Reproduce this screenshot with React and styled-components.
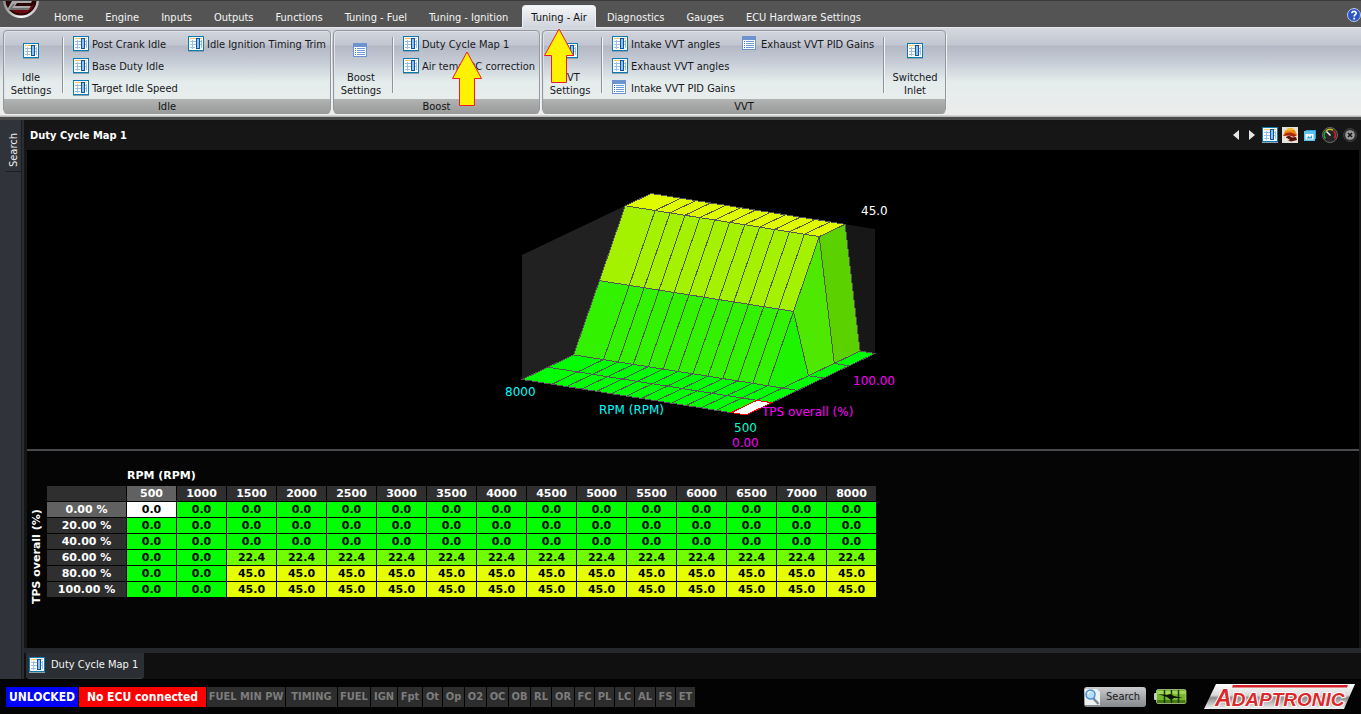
import React from "react";
import styled, { createGlobalStyle, css } from "styled-components";

const GlobalStyle = createGlobalStyle`
  * {
    box-sizing: border-box;
  }
  body {
    margin: 0;
    background: #030303;
    font-family: "DejaVu Sans Condensed", "DejaVu Sans", sans-serif;
    font-size: 11px;
    line-height: 13px;
  }
  button {
    border: 0;
    padding: 0;
    background: none;
    color: inherit;
    font: inherit;
    cursor: pointer;
  }
`;

/* ---------- data ---------- */

const menuTabs = [
  "Home",
  "Engine",
  "Inputs",
  "Outputs",
  "Functions",
  "Tuning - Fuel",
  "Tuning - Ignition",
  "Tuning - Air",
  "Diagnostics",
  "Gauges",
  "ECU Hardware Settings",
];
const activeTab = "Tuning - Air";

const flags = [
  ["FUEL MIN PW", 78],
  ["TIMING", 51],
  ["FUEL", 32],
  ["IGN", 26],
  ["Fpt", 24],
  ["Ot", 19],
  ["Op", 21],
  ["O2", 21],
  ["OC", 21],
  ["OB", 21],
  ["RL", 20],
  ["OR", 22],
  ["FC", 19],
  ["PL", 19],
  ["LC", 19],
  ["AL", 20],
  ["FS", 19],
  ["ET", 19],
];

const rpms = [
  500, 1000, 1500, 2000, 2500, 3000, 3500, 4000, 4500, 5000, 5500, 6000, 6500,
  7000, 8000,
];
const tps = [0, 20, 40, 60, 80, 100];

const dutyAt = (rpm, load) => {
  if (rpm < 1500 || load < 60) return 0;
  return load === 60 ? 22.4 : 45;
};

/* ---------- icons ---------- */

const MapIcon = () => (
  <svg width="16" height="16" viewBox="0 0 16 16">
    <rect x="0" y="0" width="16" height="15" fill="#0c7ab0" />
    <rect x="0" y="15" width="16" height="1" fill="#8fa3ae" />
    <rect x="1" y="1" width="14" height="13" fill="#fff" />
    <rect x="2" y="2" width="12" height="1" fill="#f7c46c" />
    <path
      d="M2 5.500H14M2 8.500H14M2 11.500H7M4.500 4V13M13.500 4V12"
      stroke="#9dbfdd"
      fill="none"
    />
    <rect x="8" y="2" width="4" height="11" fill="#0b56ab" />
    <rect x="9" y="3" width="2" height="9" fill="#8fc0f2" />
  </svg>
);

const ListIcon = () => (
  <svg width="16" height="16" viewBox="0 0 16 16">
    <rect x="0" y="0" width="14" height="14" fill="#6c93cf" />
    <rect x="1" y="4" width="12" height="9" fill="#fff" />
    <path d="M2 5.500H3M2 7.500H3M2 9.500H3M2 11.500H3" stroke="#3f6cb4" />
    <path d="M4 5.500H12M4 7.500H12M4 9.500H12M4 11.500H12" stroke="#6f9ad8" />
  </svg>
);

const SurfaceIcon = () => (
  <svg width="16" height="16" viewBox="0 0 16 16">
    <rect width="16" height="16" fill="#e6e2dc" />
    <path d="M1 9 3 4 6 1.500 10 1 13 3.500 15 8 9 6.500Z" fill="#e88a10" />
    <path d="M3 4 6 1.500 10 1 12 3Z" fill="#f5c030" />
    <path d="M1 9 4 6 9 5.500 15 8 12 10 7 8.500Z" fill="#b02808" />
    <path d="M4 10 7 8.500 10 10.500 14 10 15 13 9 14.500 5 13Z" fill="#5a1204" />
    <path d="M1 12 5 11 8 13 3 14Z" fill="#f6e8d8" />
  </svg>
);

const WindowsIcon = () => (
  <svg width="16" height="16" viewBox="0 0 16 16">
    <path d="M4 3H14V12H4Z" fill="#2d9fd6" />
    <rect x="2" y="4" width="11" height="10" fill="#5cc3ee" />
    <rect x="3.500" y="7" width="8" height="5.500" fill="#f2fbff" />
    <path d="M4.500 11.500 6.500 9 8 10.500 10 8V11.500Z" fill="#3a9fd4" />
  </svg>
);

const GaugeIcon = () => (
  <svg width="16" height="16" viewBox="0 0 16 16">
    <circle cx="8" cy="8" r="7.500" fill="#252525" stroke="#6d6d6d" />
    <path d="M3.500 11.500A5.500 5.500 0 0 1 4 4" stroke="#1fb03a" strokeWidth="1.500" fill="none" />
    <path d="M4 4A5.500 5.500 0 0 1 11 3.300" stroke="#c9c020" strokeWidth="1.500" fill="none" />
    <path d="M11.500 3.800A5.500 5.500 0 0 1 12.300 11.500" stroke="#d82020" strokeWidth="1.500" fill="none" />
    <path d="M4.500 4.500 8.500 8.500" stroke="#f4f4f4" strokeWidth="1.500" />
  </svg>
);

const CloseIcon = () => (
  <svg width="16" height="16" viewBox="-1 -1 16 16">
    <circle cx="7" cy="7" r="6.500" fill="#2d2d2d" stroke="#3b3b3b" />
    <circle cx="7" cy="7" r="4.800" fill="#9b9b9b" />
    <path d="M5 5 9 9M9 5 5 9" stroke="#151515" strokeWidth="1.500" />
  </svg>
);

const Chevron = ({ flip }) => (
  <svg width="6" height="10" viewBox="0 0 6 10">
    <path d={flip ? "M0 0 6 5 0 10Z" : "M6 0 0 5 6 10Z"} fill="#e4e4e4" />
  </svg>
);

const HelpIcon = () => (
  <svg width="14" height="14" viewBox="0 0 14 14">
    <circle cx="7" cy="7" r="6.500" fill="#2b55c4" stroke="#b9c8ea" />
    <path
      d="M4.800 5.300C4.800 2.600 9.300 2.700 9.200 5.300 9.100 6.800 7.200 6.700 7.200 8.600"
      stroke="#fff"
      strokeWidth="1.700"
      fill="none"
    />
    <rect x="6.300" y="9.700" width="1.800" height="1.800" fill="#fff" />
  </svg>
);

const MagnifierIcon = () => (
  <svg width="17" height="18" viewBox="0 0 17 18">
    <path d="M1 1H13L16 4V17H1Z" fill="#eef1f4" />
    <path d="M9 10 14.500 16" stroke="#7c8790" strokeWidth="2.500" />
    <circle cx="6.500" cy="6.500" r="4.500" fill="#b5defa" stroke="#4c8fcf" strokeWidth="1.500" />
    <path d="M4 6A3 3 0 0 1 7 3.500" stroke="#fff" strokeWidth="1.200" fill="none" />
  </svg>
);

const BatteryIcon = () => (
  <svg width="33" height="15" viewBox="0 0 33 15">
    <rect x="0" y="4" width="3" height="7" rx="1" fill="#c9c9c9" />
    <rect x="2.500" y="0.500" width="29.500" height="14" rx="1.500" fill="#76b82a" stroke="#d5e8c0" strokeWidth="0.600" />
    <rect x="3" y="2" width="28.500" height="3" fill="#a4d45a" />
    <rect x="3" y="11" width="28.500" height="3" fill="#467c12" />
    <path d="M10.500 1V14M17.500 1V14M24.500 1V14" stroke="#1c3804" strokeWidth="1.500" />
    <path d="M4 5 13 6 16 5 20 7 29 9 20 9 17 11 13 8Z" fill="#0c1404" />
  </svg>
);

const OrbIcon = () => (
  <svg width="43" height="18" viewBox="0 0 43 18">
    <defs>
      <linearGradient id="ring" x1="0" y1="0" x2="1" y2="0">
        <stop offset="0" stopColor="#8a8a8a" />
        <stop offset="0.500" stopColor="#ffffff" />
        <stop offset="1" stopColor="#b5b5b5" />
      </linearGradient>
    </defs>
    <circle cx="21" cy="-1" r="18" fill="url(#ring)" />
    <circle cx="21" cy="-1" r="15.500" fill="#2a0405" />
    <path d="M10 8Q21 17 32 8L34 3 26 9Z" fill="#6b0b0f" />
    <path d="M12 0H32L31 2H17L15 5H31L28 9H7Z" fill="#a9a9a9" />
    <path d="M9 8 13 3H15L12 7H29L28 9H8Z" fill="#6f6f6f" />
  </svg>
);

const BrandLogo = () => (
  <svg width="154" height="27" viewBox="0 0 154 27" role="img" aria-label="Adaptronic">
    <defs>
      <linearGradient id="plate" x1="0" y1="0" x2="0" y2="1">
        <stop offset="0" stopColor="#ffffff" />
        <stop offset="0.450" stopColor="#d9d9d9" />
        <stop offset="0.550" stopColor="#8d8d8d" />
        <stop offset="1" stopColor="#f4f4f4" />
      </linearGradient>
    </defs>
    <path d="M13 1H152L141 26H1Z" fill="url(#plate)" />
    <path d="M30 2H145L144 4.500H29Z" fill="#d8202a" />
    <text
      x="12"
      y="23"
      fill="#dc2a2c"
      stroke="#ffffff"
      strokeWidth="2"
      paintOrder="stroke"
      fontFamily="'Liberation Sans', sans-serif"
      fontWeight="bold"
      fontStyle="italic"
      fontSize="19"
    >
      <tspan fontSize="23">A</tspan>DAPTRONIC
    </text>
  </svg>
);

const ArrowMark = ({ left = "50%", top = "100%" }) => (
  <Pointer $left={left} $top={top} width="30" height="55" viewBox="0 0 30 55" aria-hidden="true">
    <path d="M15 1 29.500 27.500H22.500V54.500H7.500V27.500H0.500Z" fill="#fff200" stroke="#ed1c24" />
  </Pointer>
);
const Pointer = styled.svg`
  position: absolute;
  top: ${(props) => props.$top};
  left: ${(props) => props.$left};
  margin-left: -15px;
  z-index: 2;
  pointer-events: none;
`;

/* ---------- menu and ribbon ---------- */

const Page = styled.div`
  display: flex;
  flex-direction: column;
  min-height: 100vh;
`;

const MenuBar = styled.header`
  display: flex;
  align-items: flex-start;
  height: 27px;
  background: #545454;
  border-top: 1px solid #3a3a3a;
  color: #f4f4f4;
`;

const MenuTabs = styled.nav`
  display: flex;
  flex: 1;
  padding-top: 4px;
`;

const MenuTab = styled.button`
  position: relative;
  height: 23px;
  padding: 2px 11px 0;
  white-space: nowrap;
  ${(props) =>
    props.$active &&
    css`
      margin: 0 0 0 3px;
      padding: 1px 8px 0;
      color: #111;
      background: linear-gradient(#f4f6f8, #cfd3dc);
      border: 1px solid #e8f2f4;
      border-bottom: 0;
      border-radius: 4px 4px 0 0;
    `}
`;

const HelpButton = styled.button`
  height: 14px;
  margin-top: 7px;
`;

const Ribbon = styled.section`
  display: flex;
  gap: 2px;
  height: 93px;
  padding: 2px 3px 4px;
  border-top: 1px solid #e6e8ec;
  border-bottom: 3px solid #4a4a4a;
  background: linear-gradient(
    #d5d8e0 0,
    #c2c6d0 17px,
    #b3b8c4 18px,
    #c6ccd6 34px,
    #e4ecec 54px,
    #ececec 87px,
    #b8bab9 88px
  );
`;

const Group = styled.div`
  display: flex;
  flex-direction: column;
  flex: 0 0 ${(props) => props.$width}px;
  border: 1px solid #94979c;
  border-radius: 4px;
  box-shadow: inset 1px 1px 0 #dfe2e8, 1px 1px 0 #f0f1f3;
`;

const GroupBody = styled.div`
  display: flex;
  flex: 1;
  padding: 2px 4px 0 1px;
`;

const GroupCaption = styled.div`
  height: 15px;
  line-height: 15px;
  text-align: center;
  color: #111;
  background: linear-gradient(#b1b4b3, #989a99);
  border-radius: 0 0 3px 3px;
`;

const BigButton = styled.button`
  display: flex;
  flex-direction: column;
  align-items: center;
  gap: 12px;
  width: 52px;
  height: 64px;
  padding-top: 10px;
  color: #17181c;
`;

const Divider = styled.div`
  width: 2px;
  height: 56px;
  margin: 4px ${(props) => (props.$end ? 4 : 9)}px 0 5px;
  background: linear-gradient(90deg, #8f949c 1px, #f2f4f6 1px);
`;

const Items = styled.div`
  display: grid;
  grid-template-rows: repeat(3, 22px);
  grid-template-columns: ${(props) => props.$columns};
  grid-auto-flow: column;
  justify-items: start;
  flex: 1;
`;

const ItemButton = styled.button`
  position: relative;
  display: flex;
  align-items: center;
  gap: 3px;
  color: #17181c;
  white-space: nowrap;
`;

/* ---------- workspace ---------- */

const Workspace = styled.div`
  display: flex;
  flex: 1;
  background: #151515;
`;

const SideBar = styled.aside`
  flex: 0 0 22px;
  padding: 11px 0 0 6px;
  background: #30343a;
  border-right: 1px solid #1b1d20;
  color: #f0f0f0;
`;

const SideTab = styled.button`
  height: 41px;
  padding: 4px 1px;
  border-top: 1px solid #1d1f22;
  writing-mode: vertical-rl;
  transform: rotate(180deg);
  text-align: center;
`;

const Document = styled.main`
  display: flex;
  flex-direction: column;
  flex: 1;
  padding-top: 3px;
  border-left: 2px solid #2a2d31;
`;

const Panel = styled.section`
  display: flex;
  flex-direction: column;
  flex: 1;
  margin: 0 2px 0 3px;
  background: #050505;
`;

const PanelHead = styled.div`
  display: flex;
  align-items: center;
  justify-content: space-between;
  height: 27px;
  padding: 0 1px 3px 3px;
  background: #161616;
  color: #fff;
`;

const PanelTitle = styled.h1`
  margin: 0;
  font-size: 11px;
`;

const PanelTools = styled.div`
  display: flex;
  align-items: center;
  gap: 4px;
`;

const Tool = styled.button`
  display: flex;
  align-items: center;
  justify-content: center;
  min-width: 12px;
  height: 16px;
`;

const ChartArea = styled.div`
  display: flex;
  justify-content: center;
  height: 299px;
  background: #000;
`;

const ChartText = styled.text`
  font-family: "DejaVu Sans", sans-serif;
  font-size: 12px;
  fill: ${(props) => props.$color};
`;

const TableArea = styled.div`
  display: flex;
  align-items: flex-start;
  flex: 1;
  padding: 18px 3px 40px;
  border-top: 2px solid #4a4a4e;
  color: #fff;
  font-family: "DejaVu Sans", sans-serif;
  font-weight: bold;
`;

const LoadLabel = styled.div`
  height: 100px;
  margin-top: 38px;
  width: 16px;
  writing-mode: vertical-rl;
  transform: rotate(180deg);
  text-align: center;
  white-space: nowrap;
`;

const DataTable = styled.table`
  border-collapse: separate;
  border-spacing: 1px;
  table-layout: fixed;
  width: 831px;
  caption {
    height: 16px;
    padding-left: 81px;
    text-align: left;
  }
  th,
  td {
    height: 15px;
    padding: 0;
    line-height: 15px;
    text-align: center;
  }
`;

const HeadCell = styled.th`
  width: ${(props) => (props.$wide ? 79 : 49)}px;
  background: ${(props) => (props.$selected ? "#616161" : "#2f2f2f")};
`;

const valueColor = (value) => {
  if (value === 0) return "#00ff00";
  return value < 30 ? "#70ff00" : "#e6ff00";
};

const ValueCell = styled.td`
  color: #000;
  background: ${(props) => (props.$selected ? "#fff" : valueColor(props.$value))};
`;

const DocTabs = styled.div`
  display: flex;
  height: 31px;
  padding-left: 2px;
  border-top: 5px solid #25282c;
  background: #101010;
`;

const DocTab = styled.button`
  display: flex;
  align-items: center;
  gap: 6px;
  padding: 0 6px 2px 3px;
  color: #f4f4f4;
  background: #2b2e33;
  border-bottom: 1px solid #3b3e43;
  border-radius: 0 0 4px 4px;
`;

/* ---------- status bar ---------- */

const StatusBar = styled.footer`
  display: flex;
  align-items: center;
  justify-content: space-between;
  height: 35px;
  padding: 0 4px 0 6px;
  background: #030303;
`;

const StatusFlags = styled.div`
  display: flex;
  gap: 1px;
`;

const Flag = styled.span`
  width: ${(props) => props.$width}px;
  height: 20px;
  line-height: 20px;
  font-size: ${(props) => (props.$color ? 12 : 11)}px;
  font-weight: bold;
  text-align: center;
  white-space: nowrap;
  color: ${(props) => (props.$color ? "#fff" : "#7c7c7c")};
  background: ${(props) => props.$color || "#2d2d2d"};
`;

const StatusTools = styled.div`
  display: flex;
  align-items: center;
`;

const SearchButton = styled.button`
  display: flex;
  align-items: center;
  gap: 5px;
  width: 62px;
  height: 20px;
  margin-right: 8px;
  border-radius: 3px;
  color: #1a1a1a;
  background: linear-gradient(#c9cbce, #85888c);
`;

const LogoBox = styled.div`
  height: 27px;
  margin-left: 16px;
`;

/* ---------- surface chart ---------- */

const project = (rpm, load, value) => {
  const across = (rpm - 500) / 7500;
  const depth = load / 100;
  const x = 273 - across * 224 + depth * 129;
  const y = 265 - across * 35.5 - depth * 61.5 - (value / 45) * 124.5;
  return `${x.toFixed(1)},${y.toFixed(1)}`;
};

const faceColor = (rpm, load) => {
  if (rpm < 1000 || load < 40) return "#00ff00";
  const side = rpm < 1500;
  if (load === 40) return side ? "#1cf400" : "#32f200";
  if (load === 60) return side ? "#4ee800" : "#a4f200";
  return side ? "#5bd200" : "#e0fa00";
};

const SurfaceChart = () => {
  const faces = [];
  for (let t = tps.length - 2; t >= 0; t--) {
    for (let r = rpms.length - 2; r >= 0; r--) {
      const selected = t === 0 && r === 0;
      const corners = [
        [rpms[r], tps[t]],
        [rpms[r + 1], tps[t]],
        [rpms[r + 1], tps[t + 1]],
        [rpms[r], tps[t + 1]],
      ];
      faces.push(
        <polygon
          key={`${r}-${t}`}
          points={corners.map(([x, y]) => project(x, y, dutyAt(x, y))).join(" ")}
          fill={selected ? "#fff" : faceColor(rpms[r], tps[t])}
          stroke={selected ? "#f00" : "#555"}
        />
      );
    }
  }
  const wall = (points) => points.map((p) => project(...p)).join(" ");
  return (
    <svg width="440" height="299" viewBox="0 0 440 299">
      <polygon
        points={wall([[8000, 0, 0], [8000, 0, 45], [8000, 100, 45], [8000, 100, 0]])}
        fill="#212121"
      />
      <polygon
        points={wall([[8000, 100, 0], [8000, 100, 45], [500, 100, 45], [500, 100, 0]])}
        fill="#171717"
      />
      <g shapeRendering="crispEdges">{faces}</g>
      <ChartText x="388" y="65" $color="#fff">45.0</ChartText>
      <ChartText x="32" y="246" $color="#00ffff">8000</ChartText>
      <ChartText x="126" y="264" $color="#00ffff">RPM (RPM)</ChartText>
      <ChartText x="261" y="282" $color="#00ffd0">500</ChartText>
      <ChartText x="259" y="297" $color="#ff00ff">0.00</ChartText>
      <ChartText x="289" y="266" $color="#ff00ff">TPS overall (%)</ChartText>
      <ChartText x="380" y="235" $color="#ff00ff">100.00</ChartText>
    </svg>
  );
};

const DutyTable = () => (
  <DataTable>
    <caption>RPM (RPM)</caption>
    <thead>
      <tr>
        <HeadCell $wide />
        {rpms.map((rpm, i) => (
          <HeadCell key={rpm} scope="col" $selected={i === 0}>
            {rpm}
          </HeadCell>
        ))}
      </tr>
    </thead>
    <tbody>
      {tps.map((load, row) => (
        <tr key={load}>
          <HeadCell scope="row" $wide $selected={row === 0}>
            {load.toFixed(2)} %
          </HeadCell>
          {rpms.map((rpm, col) => (
            <ValueCell
              key={rpm}
              $value={dutyAt(rpm, load)}
              $selected={row === 0 && col === 0}
            >
              {dutyAt(rpm, load).toFixed(1)}
            </ValueCell>
          ))}
        </tr>
      ))}
    </tbody>
  </DataTable>
);

const Item = ({ list, marked, children }) => (
  <ItemButton>
    {list ? <ListIcon /> : <MapIcon />}
    {children}
    {marked && <ArrowMark left="60%" top="80%" />}
  </ItemButton>
);

const Big = ({ list, top, bottom }) => (
  <BigButton>
    {list ? <ListIcon /> : <MapIcon />}
    <span>
      {top}
      <br />
      {bottom}
    </span>
  </BigButton>
);

const App = () => {
  return (
    <Page>
      <GlobalStyle />
      <MenuBar>
        <OrbIcon />
        <MenuTabs>
          {menuTabs.map((tab) => (
            <MenuTab key={tab} $active={tab === activeTab}>
              {tab}
              {tab === activeTab && <ArrowMark />}
            </MenuTab>
          ))}
        </MenuTabs>
        <HelpButton aria-label="Help">
          <HelpIcon />
        </HelpButton>
      </MenuBar>
      <Ribbon>
        <Group $width={327}>
          <GroupBody>
            <Big top="Idle" bottom="Settings" />
            <Divider />
            <Items $columns="115px 1fr">
              <Item>Post Crank Idle</Item>
              <Item>Base Duty Idle</Item>
              <Item>Target Idle Speed</Item>
              <Item>Idle Ignition Timing Trim</Item>
            </Items>
          </GroupBody>
          <GroupCaption>Idle</GroupCaption>
        </Group>
        <Group $width={207}>
          <GroupBody>
            <Big list top="Boost" bottom="Settings" />
            <Divider />
            <Items $columns="1fr">
              <Item marked>Duty Cycle Map 1</Item>
              <Item>Air temp DC correction</Item>
            </Items>
          </GroupBody>
          <GroupCaption>Boost</GroupCaption>
        </Group>
        <Group $width={404}>
          <GroupBody>
            <Big top="VVT" bottom="Settings" />
            <Divider />
            <Items $columns="130px 1fr">
              <Item>Intake VVT angles</Item>
              <Item>Exhaust VVT angles</Item>
              <Item list>Intake VVT PID Gains</Item>
              <Item list>Exhaust VVT PID Gains</Item>
            </Items>
            <Divider $end />
            <Big top="Switched" bottom="Inlet" />
          </GroupBody>
          <GroupCaption>VVT</GroupCaption>
        </Group>
      </Ribbon>
      <Workspace>
        <SideBar>
          <SideTab>Search</SideTab>
        </SideBar>
        <Document>
          <Panel>
            <PanelHead>
              <PanelTitle>Duty Cycle Map 1</PanelTitle>
              <PanelTools>
                <Tool aria-label="Previous"><Chevron /></Tool>
                <Tool aria-label="Next"><Chevron flip /></Tool>
                <Tool aria-label="Table view"><MapIcon /></Tool>
                <Tool aria-label="Surface view"><SurfaceIcon /></Tool>
                <Tool aria-label="Windows"><WindowsIcon /></Tool>
                <Tool aria-label="Gauges"><GaugeIcon /></Tool>
                <Tool aria-label="Close"><CloseIcon /></Tool>
              </PanelTools>
            </PanelHead>
            <ChartArea>
              <SurfaceChart />
            </ChartArea>
            <TableArea>
              <LoadLabel>TPS overall (%)</LoadLabel>
              <DutyTable />
            </TableArea>
          </Panel>
          <DocTabs>
            <DocTab>
              <MapIcon />
              Duty Cycle Map 1
            </DocTab>
          </DocTabs>
        </Document>
      </Workspace>
      <StatusBar>
        <StatusFlags>
          <Flag $width={72} $color="#0000ff">UNLOCKED</Flag>
          <Flag $width={127} $color="#ff0000">No ECU connected</Flag>
          {flags.map(([name, width]) => (
            <Flag key={name} $width={width}>{name}</Flag>
          ))}
        </StatusFlags>
        <StatusTools>
          <SearchButton>
            <MagnifierIcon />
            Search
          </SearchButton>
          <BatteryIcon />
          <LogoBox>
            <BrandLogo />
          </LogoBox>
        </StatusTools>
      </StatusBar>
    </Page>
  );
};

export default App;
